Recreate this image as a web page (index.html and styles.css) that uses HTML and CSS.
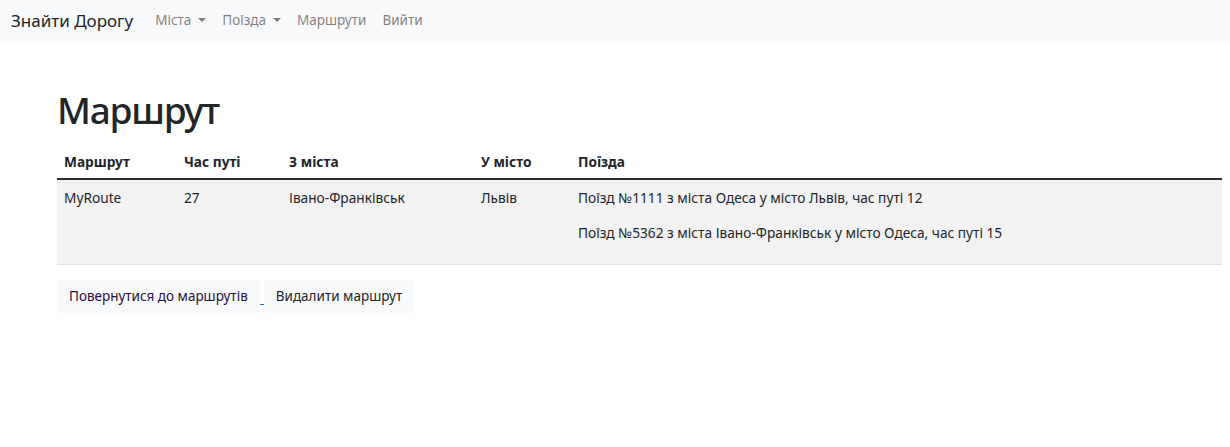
FILE: index.html
```html
<!DOCTYPE html>
<html lang="uk">
<head>
<meta charset="utf-8">
<title>Маршрут</title>
<link rel="stylesheet" href="styles.css">
</head>
<body>
<nav class="navbar">
  <a class="brand" href="#">Знайти Дорогу</a>
  <ul class="nav">
    <li><a class="nav-link dropdown" href="#">Міста</a></li>
    <li><a class="nav-link dropdown" href="#">Поїзда</a></li>
    <li><a class="nav-link" href="#">Маршрути</a></li>
    <li><a class="nav-link" href="#">Вийти</a></li>
  </ul>
</nav>
<main class="content">
  <h1 class="title">Маршрут</h1>
  <table class="table">
    <thead>
      <tr>
        <th class="c1">Маршрут</th>
        <th class="c2">Час путі</th>
        <th class="c3">З міста</th>
        <th class="c4">У місто</th>
        <th>Поїзда</th>
      </tr>
    </thead>
    <tbody>
      <tr>
        <td>MyRoute</td>
        <td>27</td>
        <td>Івано-Франківськ</td>
        <td>Львів</td>
        <td>
          <p>Поїзд №1111 з міста Одеса у місто Львів, час путі 12</p>
          <p>Поїзд №5362 з міста Івано-Франківськ у місто Одеса, час путі 15</p>
        </td>
      </tr>
    </tbody>
  </table>
  <div class="actions">
    <a class="link" href="#"><button class="btn btn-back">Повернутися до маршрутів</button><span class="gap"></span></a>
    <button class="btn">Видалити маршрут</button>
  </div>
</main>
</body>
</html>
```
FILE: styles.css
```css
html, body {
  margin: 0;
  padding: 0;
}
body {
  font-family: "Noto Sans", "Open Sans", sans-serif;
  font-size: 13.7px;
  line-height: 21px;
  color: #212529;
  background: #fff;
}
.navbar {
  display: flex;
  align-items: center;
  height: 41px;
  padding: 0 11px;
  background: #f8f9fa;
  box-sizing: border-box;
}
.brand {
  font-size: 17px;
  color: #212529;
  text-decoration: none;
  margin-right: 14px;
}
.nav {
  display: flex;
  list-style: none;
  margin: 0;
  padding: 0;
}
.nav-link {
  display: block;
  padding: 8px 8px;
  color: rgba(0,0,0,.5);
  text-decoration: none;
  font-size: 13.5px;
}
.dropdown::after {
  content: "";
  display: inline-block;
  margin-left: 7px;
  vertical-align: 3px;
  border-top: 4.5px solid;
  border-left: 4px solid transparent;
  border-right: 4px solid transparent;
}
.content {
  padding: 47px 8px 0 57px;
}
.title {
  font-size: 37px;
  letter-spacing: -1.2px;
  font-weight: 500;
  line-height: 1.2;
  margin: 0 0 12px 0;
}
.table {
  width: 100%;
  border-collapse: collapse;
  margin-bottom: 15px;
}
.table th, .table td {
  text-align: left;
  vertical-align: top;
  padding: 7px;
}
.table th {
  font-weight: 700;
  padding-bottom: 6px;
  border-bottom: 2px solid #2b2b2b;
}
.table td {
  background: #f2f2f2;
  border-bottom: 1px solid #dee2e6;
}
.table td p {
  margin: 0 0 14px 0;
}
.c1 { width: 106px; }
.c2 { width: 91px; }
.c3 { width: 178px; }
.c4 { width: 83px; }
.actions {
  display: flex;
  align-items: center;
}
.link {
  display: flex;
  align-items: center;
  text-decoration: none;
}
.gap {
  display: block;
  width: 4px;
  height: 0;
  margin-top: 16px;
  border-bottom: 1px solid #0d6efd;
}
.btn {
  font-family: inherit;
  font-size: 13.5px;
  line-height: 21px;
  padding: 6px 12px;
  border: 0;
  border-radius: 4px;
  background: #f8f9fa;
  color: #212529;
  cursor: pointer;
  text-decoration: none;
}
.btn-back {
  color: #2a0f3f;
}
```
